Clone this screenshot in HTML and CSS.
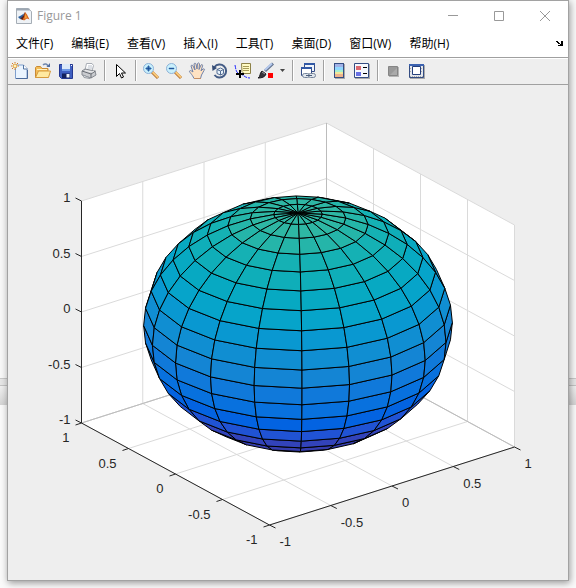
FILE: index.html
```html
<!DOCTYPE html>
<html lang="zh-CN">
<head>
<meta charset="utf-8">
<title>Figure 1</title>
<link rel="stylesheet" href="styles.css">
</head>
<body>
<main class="window">
  <header class="titlebar">
    <svg class="logo" width="16" height="16" viewBox="0 0 16 16">
      <path d="M.5.5H12l3.500 3V15.500H.5z" fill="#eef2f6" stroke="#a5adb5"/>
      <path d="M.5 1.500h13" stroke="#9da7b2" stroke-width="2"/>
      <path d="M2 9l3-1.500L8 5.500 6.500 10 4 11z" fill="#2a5f9e"/>
      <path d="M4 11L7 8l2-4L10 7l-3 5z" fill="#5b2016"/>
      <path d="M9 4l2 2.500 2.500 5-2.500-1L8 12.500l-1.500-1L8 9z" fill="#d9641e"/>
      <path d="M9.500 5.500L11 9.500 8.500 11z" fill="#f3a53a"/>
    </svg>
    <h1 class="title">Figure 1</h1>
    <button class="caption" aria-label="最小化"><svg width="12" height="12"><path d="M1 5.500h10"/></svg></button>
    <button class="caption" aria-label="最大化"><svg width="12" height="12"><path d="M1.500 1.500h9v9h-9z"/></svg></button>
    <button class="caption" aria-label="关闭"><svg width="12" height="12"><path d="M1 1l10 10M11 1L1 11"/></svg></button>
  </header>
  <nav class="menubar">
    <button>文件(F)</button>
    <button>编辑(E)</button>
    <button>查看(V)</button>
    <button>插入(I)</button>
    <button>工具(T)</button>
    <button>桌面(D)</button>
    <button>窗口(W)</button>
    <button>帮助(H)</button>
    <button class="dock" aria-label="停靠"><svg width="7" height="5" viewBox="0 0 7 5"><path d="M0 0h2v1h1v1h1v1h1V0h2v5H2V4h2V3H2V2H1V1H0z" fill="#000"/></svg></button>
  </nav>
  <div class="toolbar" role="toolbar">
    <button aria-label="新建图窗"><svg width="18" height="18" viewBox="0 0 18 18">
      <path d="M4.500 3H12.500l3.500 3.500V16.500h-11.500z" fill="#eaf4ff" stroke="#7f9fcd"/><path d="M12.500 3v4h4" fill="#fff" stroke="#53739f"/><path d="M5 16.500h11.500V8" fill="none" stroke="#4a6a9c"/>
      <circle cx="4" cy="4" r="2" fill="#fff2ba" stroke="#e09a38"/><path d="M4 0v1M4 7v1M0 4h1M7 4h1M1 1l1 1M7 1L6 2M1 7l1-1" stroke="#d17a24"/></svg></button>
    <button aria-label="打开文件"><svg width="18" height="18" viewBox="0 0 18 18">
      <path d="M1.500 15.500v-10l1-1h4l1.500 2h6v9z" fill="#f3bd58" stroke="#c98a34"/><path d="M1.500 15.500L4.500 9h12l-2 6.500z" fill="#ffe9a0" stroke="#d69a3c"/><path d="M3 7.500h10" stroke="#fff2c4"/>
      <path d="M9 3c2-2 4-1 5 1" fill="none" stroke="#7087ad" stroke-width="1.500"/><path d="M12.500 5h3.500v-4z" fill="#526e9f"/></svg></button>
    <button aria-label="保存"><svg width="18" height="18" viewBox="0 0 18 18">
      <path d="M2.500 2.500h13v14h-11l-2-2z" fill="#3f5fc0" stroke="#253890"/><path d="M5 2h8v7H5z" fill="#dce9f8"/><path d="M5 7h8v2H5z" fill="#6f9ae6"/><path d="M5 11.500h8V16H5z" fill="#13205d"/><path d="M9.500 12h3v3.500h-3z" fill="#eef3fa"/><path d="M14 3.500h1" stroke="#fff"/></svg></button>
    <button aria-label="打印"><svg width="18" height="18" viewBox="0 0 18 18">
      <path d="M5 8L6.500 1.500H12l1.500 2L12 9z" fill="#fff" stroke="#a8adb5"/><path d="M8 4h4M7.500 6H12" stroke="#b9c1cc"/>
      <path d="M2 9l3-2 10 2 1 4-5 3-9-3z" fill="#c9cbcf" stroke="#868a91"/><path d="M2 9l9 3 4.500-3M11 12v4" fill="none" stroke="#6a6e75"/><path d="M5 8.500l7 1.500 2-1" fill="none" stroke="#eee"/><path d="M3 13l6 2.500 1 1-6-1z" fill="#e6e9eb" stroke="#959aa1"/></svg></button>
    <span class="separator"></span>
    <button aria-label="编辑绘图"><svg width="18" height="18" viewBox="0 0 18 18"><path d="M5.500 2.500v12l3-3 2 4.500 2-1-2-4h4z" fill="#fff" stroke="#000"/></svg></button>
    <span class="separator"></span>
    <button aria-label="放大"><svg width="18" height="18" viewBox="0 0 18 18"><path d="M10 10l6 6" stroke="#ae6a2a" stroke-width="3"/><path d="M10.500 10l5.500 5.500" stroke="#f8c878" stroke-width="2"/><circle cx="6.500" cy="6.500" r="5" fill="#c9f0fc" stroke="#8db2d8"/><path d="M6 4h1v2h2v1H7v2H6V7H4V6h2z" fill="#1c4c91" stroke="#2a62a8"/></svg></button>
    <button aria-label="缩小"><svg width="18" height="18" viewBox="0 0 18 18"><path d="M10 10l6 6" stroke="#ae6a2a" stroke-width="3"/><path d="M10.500 10l5.500 5.500" stroke="#f8c878" stroke-width="2"/><circle cx="6.500" cy="6.500" r="5" fill="#c9f0fc" stroke="#8db2d8"/><path d="M4 6h5v1H4z" fill="#1c4c91" stroke="#2a62a8" stroke-width=".5"/></svg></button>
    <button aria-label="平移"><svg width="18" height="18" viewBox="0 0 18 18"><path d="M6 16.500C4 12 1 10 1.500 9c1-1 2 0 3.500 1L3 4c.5-1.500 1.500-1 2 0l2 4-1-6c.5-1.200 1.500-1 2 0l1 5 .5-5.500c.7-1 1.700-.6 2 .5l-.5 5.500L13 3c1-1 2 0 1.500 1L13 9l2-2c1.500-.5 2 .5 1 1.500L13.500 13l-1 3.500z" fill="#ffe2c2" stroke="#7183aa"/><path d="M6 16.500h7" stroke="#c48e65"/></svg></button>
    <button aria-label="三维旋转"><svg width="18" height="18" viewBox="0 0 18 18"><path d="M3.500 5A6.500 6.500 0 1 1 3.500 13" fill="none" stroke="#445c86" stroke-width="2"/><path d="M1 3l.5 6L6 6z" fill="#344c76"/><path d="M6 7.500L9.500 6l3 1.500v4l-3 1.500L6 11.500zM6 7.500L9.500 9l3-1.500M9.500 9v4" fill="#e8f2fb" stroke="#536d94"/></svg></button>
    <button aria-label="数据游标"><svg width="18" height="18" viewBox="0 0 18 18"><path d="M7.500 1.500h9v10H10l-2-2z" fill="#fffbc4" stroke="#8d8147"/><path d="M9 4.500h6M9 6.500h6M9 8.500h6" stroke="#a79b58"/><path d="M1 3c1 5 1 8 5 9s5 4 10 4" fill="none" stroke="#2026ff" stroke-dasharray="4 1"/><path d="M6 8v8M2 12h8" stroke="#000" stroke-width="2"/></svg></button>
    <button aria-label="刷亮数据"><svg width="18" height="18" viewBox="0 0 18 18"><path d="M8 9l8-7.500" stroke="#61718e" stroke-width="3"/><path d="M8 8l7-6.500" stroke="#b4c8ec" stroke-width="2"/><path d="M5 9l4 3c-1 3-4 4-8 4 3-2 1-4 4-7z" fill="#36343a" stroke="#1d1b20"/><path d="M5 10l3 2" stroke="#99999d"/><path d="M11 11h5v5h-5z" fill="#f00"/></svg></button>
    <button class="dropdown" aria-label="刷亮选项"><svg width="5" height="3"><path d="M0 0h5L2.500 3z" fill="#444"/></svg></button>
    <span class="separator"></span>
    <button aria-label="链接绘图"><svg width="18" height="18" viewBox="0 0 18 18"><path d="M5.500 1.500h10v8h-10z" fill="#eff4fb" stroke="#344c86"/><path d="M5 2h11" stroke="#3158a5" stroke-width="2"/><path d="M2.500 5.500h10v8h-10z" fill="#fff" stroke="#344c86"/><path d="M2 6h11" stroke="#3158a5" stroke-width="2"/><rect x="3.500" y="11.500" width="7" height="4" rx="2" fill="#dfe5ec" stroke="#76859c"/><rect x="9.500" y="11.500" width="7" height="4" rx="2" fill="#dfe5ec" stroke="#76859c"/><path d="M7 13.500h6" stroke="#495b78"/></svg></button>
    <span class="separator"></span>
    <button aria-label="插入颜色栏"><svg width="18" height="18" viewBox="0 0 18 18"><path d="M5 2h10v15H5z" fill="#aaa"/><path d="M4 1h10v15H4z" fill="#344d83"/><path d="M5 2h8v3H5z" fill="#a1b2e6"/><path d="M5 5h8v3H5z" fill="#90d8ff"/><path d="M5 8h8v2H5z" fill="#a5efd0"/><path d="M5 10h8v2H5z" fill="#f0e89b"/><path d="M5 12h8v3H5z" fill="#efb28b"/></svg></button>
    <button aria-label="插入图例"><svg width="18" height="18" viewBox="0 0 18 18"><path d="M2 2h15v15H2z" fill="#aaa"/><path d="M1.500 1.500h14v14h-14z" fill="#f5f8fd" stroke="#344d83"/><path d="M3 4h5v4H3z" fill="#dc6970"/><path d="M3 10h5v4H3z" fill="#6870e5"/><path d="M10 5.500h4M10 11.500h4" stroke="#000"/></svg></button>
    <span class="separator"></span>
    <button aria-label="隐藏绘图工具"><svg width="18" height="18" viewBox="0 0 18 18"><path d="M5 5h10v10H5z" fill="#b5b5b5"/><path d="M4.500 4.500h9v9h-9z" fill="#999" stroke="#858585"/><path d="M6 13l7-7v7z" fill="#aaa"/></svg></button>
    <button aria-label="显示绘图工具"><svg width="18" height="18" viewBox="0 0 18 18"><path d="M3 3h15v14H3z" fill="#aaa"/><path d="M2.500 2.500h14v13h-14z" fill="#e4e7ec" stroke="#344d83"/><path d="M2 3h15" stroke="#3c62b0" stroke-width="2"/><path d="M5.500 4.500h8v8h-8z" fill="#fff" stroke="#253f7b"/><path d="M3 6.500h2M14 6.500h2M3 9.500h2M14 9.500h2M3 14.500h13" stroke="#aaa" stroke-dasharray="1 1"/></svg></button>
  </div>
  <svg class="plot" viewBox="8 85 560 495" role="img" aria-label="球面图">
    <path class="walls" d="M81.500 423V201L326.500 123 514.500 225V447L269.500 525z"/>
    <g id="grid" class="grid"></g>
    <g id="surface" class="surface"></g>
    <path class="axis-line" d="M81.500 201V423L269.500 525 514.500 447"/>
    <g id="ticks" class="axis-line"></g>
    <g id="labels"></g>
  </svg>
</main>
<script src="script.js"></script>
</body>
</html>
```
FILE: styles.css
```css
* { box-sizing: border-box; }

body {
  margin: 0;
  padding: 0 7px 6px;
  min-height: 100vh;
  background: linear-gradient(#f8f8f8 378px, #c8c8c8 378px, #c8c8c8 379px, #e6e6e6 379px, #e6e6e6 385px, #c4c4c4 385px, #c4c4c4 386px, #f0f0f0 386px, #d4d4d4 405px, #fafafa 405px);
  font: 12px/16px "Open Sans", "Noto Sans CJK SC", sans-serif;
  color: #000;
}

button {
  display: flex;
  align-items: center;
  justify-content: center;
  padding: 0;
  border: 0;
  background: none;
  font: inherit;
  color: inherit;
}

.window {
  border: 1px solid #a2a2a2;
  background: #eee;
  box-shadow: 1px 2px 7px rgba(0, 0, 0, 0.4);
}

.titlebar {
  display: flex;
  align-items: center;
  height: 29px;
  padding-left: 8px;
  background: #fff;
}

.title {
  flex: 1;
  margin: 0 0 0 5px;
  font-size: 12px;
  font-weight: 400;
  color: #999;
}

.caption {
  width: 46px;
  height: 28px;
}

.caption path {
  fill: none;
  stroke: #999;
}

.menubar {
  display: flex;
  align-items: center;
  gap: 18px;
  height: 28px;
  padding: 0 5px 0 8px;
  border-bottom: 1px solid #a0a0a0;
  background: #fff;
}

.menubar button { white-space: nowrap; }

.menubar .dock { margin-left: auto; }

.toolbar {
  display: flex;
  align-items: center;
  height: 27px;
  padding-bottom: 2px;
  border-top: 1px solid #fff;
  border-bottom: 1px solid #a0a0a0;
}

.toolbar button {
  width: 23px;
  height: 23px;
}

.toolbar .dropdown { width: 11px; }

.separator {
  width: 1px;
  height: 21px;
  margin: 0 3px 0 4px;
  background: #a0a0a0;
  box-shadow: 1px 0 #fff;
}

.plot {
  display: block;
  width: 100%;
}

.walls { fill: #fff; }

.grid {
  fill: none;
  stroke: #dadada;
}

.grid .edge { stroke: #bcbcbc; }

.surface {
  stroke: #000;
  stroke-linejoin: round;
}

.axis-line {
  fill: none;
  stroke: #262626;
}

.plot text {
  font: 13px "Liberation Sans", Arial, sans-serif;
  fill: #262626;
}

.align-end { text-anchor: end; }
```
FILE: script.js
```js
const SVG_NS = "http://www.w3.org/2000/svg";
const byId = id => document.getElementById(id);

function add(parent, tag, attributes, text) {
  const node = document.createElementNS(SVG_NS, tag);
  for (const name in attributes) node.setAttribute(name, attributes[name]);
  if (text !== undefined) node.textContent = text;
  parent.appendChild(node);
}

// Data coordinates to drawing coordinates, orthographic view.
function project(x, y, z) {
  return [298 + 122.5 * x - 94 * y, 324 - 39 * x - 51 * y - 111 * z];
}

function polyline(points) {
  return "M" + points.map(p => p.map(v => v.toFixed(2)).join(" ")).join("L");
}

const steps = [-1, -0.5, 0, 0.5, 1];
for (const t of steps) {
  const lines = [
    [project(t, -1, -1), project(t, 1, -1), project(t, 1, 1)],
    [project(-1, t, -1), project(1, t, -1), project(1, t, 1)],
    [project(-1, 1, t), project(1, 1, t), project(1, -1, t)]
  ];
  for (const line of lines) add(byId("grid"), "path", { d: polyline(line) });
}
add(byId("grid"), "path", {
  class: "edge",
  d: polyline([project(-1, 1, -1), project(1, 1, -1), project(1, -1, -1)])
});
add(byId("grid"), "path", {
  class: "edge",
  d: polyline([project(1, 1, -1), project(1, 1, 1)])
});

const parula = [
  [.2081, .1663, .5292], [.2116, .1898, .5777], [.2123, .2138, .6270],
  [.2081, .2386, .6771], [.1959, .2645, .7279], [.1707, .2919, .7792],
  [.1253, .3242, .8303], [.0591, .3598, .8683], [.0117, .3875, .8820],
  [.0060, .4086, .8828], [.0165, .4266, .8786], [.0329, .4430, .8720],
  [.0498, .4586, .8641], [.0629, .4737, .8554], [.0723, .4887, .8467],
  [.0779, .5040, .8384], [.0793, .5200, .8312], [.0749, .5375, .8263],
  [.0641, .5570, .8240], [.0488, .5772, .8228], [.0343, .5966, .8199],
  [.0265, .6137, .8135], [.0239, .6287, .8038], [.0231, .6418, .7913],
  [.0228, .6535, .7768], [.0267, .6642, .7607], [.0384, .6743, .7436],
  [.0590, .6838, .7254], [.0843, .6928, .7062], [.1133, .7015, .6859],
  [.1453, .7098, .6646], [.1801, .7177, .6424], [.2178, .7250, .6193]
];

function spherePoint(row, column) {
  const phi = (row - 10) * Math.PI / 20;
  const theta = (column - 10) * Math.PI / 10;
  return project(Math.cos(phi) * Math.cos(theta), Math.cos(phi) * Math.sin(theta), Math.sin(phi));
}

for (let row = 0; row < 20; row++) {
  const z = Math.sin((row - 10) * Math.PI / 20);
  const color = parula[Math.floor((z + 1) * 16)].map(v => Math.round(v * 255));
  for (let column = 0; column < 20; column++) {
    const corners = [
      spherePoint(row, column), spherePoint(row, column + 1),
      spherePoint(row + 1, column + 1), spherePoint(row + 1, column)
    ];
    const area = corners.reduce((sum, p, i) => {
      const q = corners[(i + 1) % 4];
      return sum + p[0] * q[1] - q[0] * p[1];
    }, 0);
    if (area < 0) add(byId("surface"), "path", {
      d: polyline(corners) + "Z",
      fill: `rgb(${color.join(",")})`
    });
  }
}

steps.forEach((value, i) => {
  const [xx, xy] = project(value, -1, -1);
  const [yx, yy] = project(-1, value, -1);
  const [zx, zy] = project(-1, 1, value);
  const ticks = byId("ticks");
  const labels = byId("labels");
  add(ticks, "path", { d: `M${xx} ${xy}l6 3M${yx} ${yy}l-6 2M${zx} ${zy}l-6 -3` });
  add(labels, "text", { x: xx + 10, y: xy + 21 }, value);
  add(labels, "text", { x: yx - 12, y: yy + 19, class: "align-end" }, value);
  add(labels, "text", { x: zx - 11, y: zy + 1, class: "align-end" }, value);
});
```
